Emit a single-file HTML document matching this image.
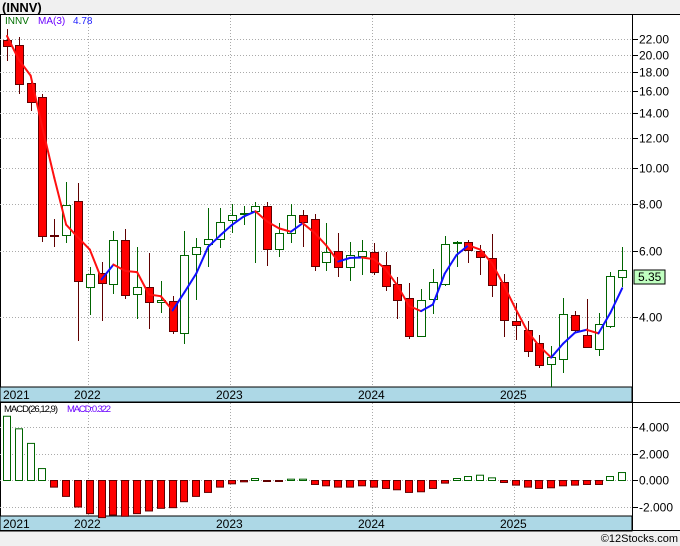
<!DOCTYPE html>
<html><head><meta charset="utf-8"><style>
html,body{margin:0;padding:0;background:#f0f0f0;}
svg{display:block;font-family:"Liberation Sans","DejaVu Sans",sans-serif;}
</style></head><body>
<svg id="s" width="680" height="546" xmlns="http://www.w3.org/2000/svg">
<rect x="0" y="0" width="680" height="546" fill="#f0f0f0"/>
<text x="2" y="12" font-size="13" font-weight="bold" fill="#000">(INNV)</text>
<rect x="0" y="14" width="680" height="517" fill="#fff"/>
<line x1="0" y1="14.5" x2="680" y2="14.5" stroke="#000"/>
<line x1="0.5" y1="14" x2="0.5" y2="531" stroke="#000"/>
<line x1="632.5" y1="14" x2="632.5" y2="531" stroke="#000"/>
<g id="grid"></g>
<rect x="0" y="387" width="632" height="15" fill="#add8e6" stroke="#000"/>
<rect x="0" y="516" width="632" height="15" fill="#add8e6" stroke="#000"/>
<line x1="0" y1="402.5" x2="680" y2="402.5" stroke="#000"/>
<line x1="0" y1="530.5" x2="680" y2="530.5" stroke="#000"/>
<g font-size="12" fill="#000">
<text x="3" y="399">2021</text><text x="74" y="399">2022</text><text x="216" y="399">2023</text><text x="358" y="399">2024</text><text x="500" y="399">2025</text>
<text x="3" y="528">2021</text><text x="74" y="528">2022</text><text x="216" y="528">2023</text><text x="358" y="528">2024</text><text x="500" y="528">2025</text>
</g>
<g id="ax"></g>
<g id="macd"></g>
<g id="candles"></g>
<g id="ma"></g>
<text x="5" y="24" font-size="10" fill="#007000">INNV</text>
<text x="38" y="24" font-size="10" fill="#6a00ff">MA(3)</text>
<text x="73" y="24" font-size="10" fill="#2020ff">4.78</text>
<text x="4" y="412" font-size="9.5" fill="#000" textLength="54">MACD(26,12,9)</text>
<text x="67" y="412" font-size="9.5" fill="#6a00ff" textLength="44">MACD:0.322</text>
<rect x="634" y="270" width="31" height="14" fill="#c0ffc0" stroke="#000"/>
<text x="638" y="281" font-size="12" fill="#000">5.35</text>
<text x="678" y="542" font-size="11" fill="#000" text-anchor="end">©12Stocks.com</text>
</svg>
<script>
var NS="http://www.w3.org/2000/svg";
function el(p,t,a){var e=document.createElementNS(NS,t);for(var k in a)e.setAttribute(k,a[k]);document.getElementById(p).appendChild(e);return e;}
function Y(p){return 204-163*Math.log(p/8);}
[22,20,18,16,14,12,10,8,6,4].forEach(function(p){var y=Math.round(Y(p))+0.5;
el("grid","line",{x1:0,y1:y,x2:632,y2:y,stroke:"#aaa","stroke-dasharray":"1,2"});
el("ax","line",{x1:632,y1:y,x2:638,y2:y,stroke:"#000"});
var t=el("ax","text",{x:639,y:y+4,"font-size":12,fill:"#000"});t.textContent=p.toFixed(2);});
[88,230,372,514].forEach(function(x){el("grid","line",{x1:x+.5,y1:15,x2:x+.5,y2:387,stroke:"#aaa","stroke-dasharray":"1,2"});
el("grid","line",{x1:x+.5,y1:403,x2:x+.5,y2:516,stroke:"#aaa","stroke-dasharray":"1,2"});});
function MY(v){return 480-13.25*v;}
[4,2,0,-2].forEach(function(v){var y=Math.round(MY(v))+0.5;
el("grid","line",{x1:0,y1:y,x2:632,y2:y,stroke:"#aaa","stroke-dasharray":"1,2"});
el("ax","line",{x1:632,y1:y,x2:638,y2:y,stroke:"#000"});
var t=el("ax","text",{x:639,y:y+4,"font-size":12,fill:"#000"});t.textContent=v.toFixed(3);});
var C=[[40,46,29,61,0],[45,84,37,94,0],[83,102,80,111,0],[97,236,94,242,0],[235,235,219,247,0],
[205,235,182,243,1],[201,281,183,341,0],[274,287,267,315,1],[273,283,262,321,0],[240,284,231,294,1],
[240,295,229,299,0],[287,294,247,319,1],[287,302,253,329,0],[300,302,281,313,1],[301,331,296,334,0],
[255,333,231,344,1],[247,254,238,300,1],[239,244,208,267,1],[222,239,208,248,1],[215,220,204,233,1],
[213,214,206,225,1],[206,211,202,263,1],[206,249,202,266,0],[233,249,223,257,1],[215,233,204,243,1],
[215,222,210,247,0],[219,266,214,271,0],[252,262,223,271,1],[251,267,233,277,0],[255,267,242,281,1],
[251,256,240,275,1],[252,272,243,275,0],[265,286,252,291,0],[284,300,277,319,0],[298,336,283,339,0],
[300,336,289,336,1],[282,299,269,314,1],[244,284,236,286,1],[242,243,241,267,1],[242,250,240,263,0],
[251,257,245,275,0],[258,285,234,297,0],[282,320,274,337,0],[321,325,303,340,0],[330,351,321,357,0],
[343,365,335,368,0],[357,364,346,387,1],[314,359,298,373,1],[315,330,311,332,0],[335,347,299,347,0],
[324,349,313,356,1],[276,326,272,328,1],[270,277,247,287,1]];
C.forEach(function(c,i){var x=Math.round(7+i*11.83);var g=c[4];
var col=g?"#006400":"#600000";
el("candles","line",{x1:x+.5,y1:c[2],x2:x+.5,y2:c[3],stroke:col});
var h=Math.max(1,c[1]-c[0]);
el("candles","rect",{x:x-3.5,y:c[0]+.5,width:8,height:h,fill:g?"#fff":"#ff0000",stroke:col});
});
var closes=C.map(function(c){var y=c[4]?c[0]:c[1];return 8*Math.exp((204-y)/163);});
var pts=[[7,36],[19,60]];
for(var i=2;i<C.length;i++){var m=(closes[i]+closes[i-1]+closes[i-2])/3;pts.push([7+i*11.83,Y(m)]);}
for(var i=1;i<pts.length;i++){var up=pts[i][1]<pts[i-1][1];
el("ma","line",{x1:pts[i-1][0],y1:pts[i-1][1],x2:pts[i][0],y2:pts[i][1],stroke:up?"#1010ff":"#ff1010","stroke-width":2,"stroke-linecap":"round"});}
var M=[4.85,3.9,2.8,0.9,-0.5,-1.2,-2,-2.5,-2.8,-2.6,-2.7,-2.5,-2.3,-2.1,-2.05,-1.6,-1.2,-0.9,-0.5,-0.25,-0.1,0.15,-0.05,-0.05,0.1,0.1,-0.3,-0.4,-0.5,-0.5,-0.4,-0.5,-0.6,-0.7,-0.9,-0.85,-0.6,-0.2,0.15,0.3,0.4,0.2,-0.15,-0.35,-0.5,-0.6,-0.55,-0.4,-0.35,-0.3,-0.3,0.3,0.6];
M.forEach(function(v,i){var x=Math.round(7+i*11.83);var g=v>0;var y0=480,y1=MY(v);
el("macd","rect",{x:x-3.5,y:Math.min(y0,y1)+.5,width:7,height:Math.max(1,Math.abs(y1-y0)),fill:g?"#fff":"#ff0000",stroke:g?"#006400":"#600000"});});
</script>
</body></html>
